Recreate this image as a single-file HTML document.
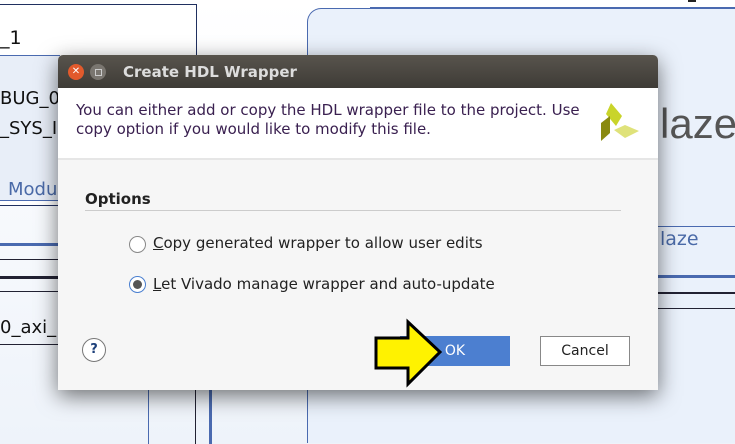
<!DOCTYPE html>
<html style="height:444px;overflow:hidden"><head><style>
body{margin:0;width:735px;height:444px;overflow:hidden;background:#f4f7fb;font-family:"DejaVu Sans","Liberation Sans",sans-serif;position:relative}
.a{position:absolute}
</style></head><body>
<div class="a" style="left:0;top:0;width:735px;height:444px;background:linear-gradient(#fff,#eef3fa)"></div>
<div class="a" style="left:-2px;top:4px;width:197px;height:200px;border:1px solid #203060;background:#fff"></div>
<div class="a" style="left:0;top:55px;width:60px;height:145px;background:#e8eef8;border-top:1px solid #4a6ab0"></div>
<div class="a" style="left:0;top:27px;font-size:19px;color:#111">_1</div>
<div class="a" style="left:0;top:88px;font-size:18px;color:#111">BUG_0</div>
<div class="a" style="left:0;top:118px;font-size:18px;color:#111">_SYS_I</div>
<div class="a" style="left:8px;top:179px;font-size:18px;color:#4a6aa8">Modu</div>
<div class="a" style="left:0;top:200px;width:60px;height:1px;background:#4a6ab0"></div>
<div class="a" style="left:0;top:243px;width:60px;height:3px;background:#4a6ab0"></div>
<div class="a" style="left:0;top:259px;width:60px;height:1px;background:#223"></div>
<div class="a" style="left:0;top:276px;width:60px;height:3px;background:#223"></div>
<div class="a" style="left:0;top:291px;width:60px;height:1px;background:#223"></div>
<div class="a" style="left:0;top:317px;font-size:18px;color:#111">0_axi_</div>
<div class="a" style="left:0;top:344px;width:60px;height:1px;background:#223"></div>
<div class="a" style="left:370px;top:7px;width:365px;height:1px;background:#4a6ab0"></div>
<div class="a" style="left:307px;top:8px;width:427px;height:434px;border:1px solid #4a6ab0;border-right:none;border-bottom:none;border-radius:14px 0 0 0;background:#eaf1fb"></div>
<div class="a" style="left:688px;top:0;width:8px;height:2px;background:#222"></div>
<div class="a" style="left:660px;top:100px;font-size:42px;color:#555;font-family:'Liberation Sans',sans-serif;width:75px;overflow:hidden;white-space:nowrap">laze</div>
<div class="a" style="left:660px;top:228px;font-size:19px;color:#4a6aa8">laze</div>
<div class="a" style="left:658px;top:226px;width:77px;height:1px;background:#4a6ab0"></div>
<div class="a" style="left:658px;top:275px;width:77px;height:3px;background:#4a6ab0"></div>
<div class="a" style="left:658px;top:292px;width:77px;height:2px;background:#223"></div>
<div class="a" style="left:658px;top:308px;width:77px;height:1px;background:#223"></div>
<div class="a" style="left:148px;top:390px;width:1px;height:54px;background:#4a6ab0"></div>
<div class="a" style="left:195px;top:390px;width:1px;height:54px;background:#223"></div>
<div class="a" style="left:209px;top:390px;width:3px;height:54px;background:#4a6ab0"></div>
<div class="a" style="left:58px;top:55px;width:600px;height:335px;box-shadow:0 6px 22px rgba(0,0,0,.55);border-radius:5px 5px 0 0;background:#f6f6f6;overflow:hidden">
 <div class="a" style="left:0;top:0;width:600px;height:33px;background:linear-gradient(#58544d,#3e3b36)"></div>
 <div class="a" style="left:10px;top:9px;width:16px;height:16px;border-radius:50%;background:#e25a2c;color:#fff;font-size:10px;text-align:center;line-height:16px">✕</div>
 <div class="a" style="left:32px;top:9px;width:16px;height:16px;border-radius:50%;background:#7a7670"><div class="a" style="left:5px;top:5px;width:5px;height:5px;border:1px solid #ccc"></div></div>
 <div class="a" style="left:65px;top:8px;font-size:15px;font-weight:bold;color:#ddd">Create HDL Wrapper</div>
 <div class="a" style="left:0;top:33px;width:600px;height:70px;background:#fff;border-bottom:2px solid #e6e6e6"></div>
 <div class="a" style="left:18px;top:46px;font-size:15px;color:#3a2050;line-height:19px;white-space:nowrap">You can either add or copy the HDL wrapper file to the project. Use<br>copy option if you would like to modify this file.</div>
 <svg class="a" style="left:540px;top:46px" width="44" height="44"><polygon points="13,2 24,15 18,25 8,13" fill="#c9d42a"/><polygon points="3,22 12,15 12,32 3,40" fill="#8a8a10"/><polygon points="16,29 27,24 41,30 27,37" fill="#dfe27a"/></svg>
 <div class="a" style="left:27px;top:135px;font-size:15px;font-weight:bold;color:#222">Options</div>
 <div class="a" style="left:27px;top:155px;width:536px;height:1px;background:#ccc"></div>
 <div class="a" style="left:71px;top:181px;width:15px;height:15px;border:1px solid #888;border-radius:50%;background:#fff"></div>
 <div class="a" style="left:95px;top:179px;font-size:15px;color:#222"><u>C</u>opy generated wrapper to allow user edits</div>
 <div class="a" style="left:71px;top:221px;width:15px;height:15px;border:1px solid #4a7fd0;border-radius:50%;background:#fff"><div class="a" style="left:3px;top:3px;width:9px;height:9px;border-radius:50%;background:#555"></div></div>
 <div class="a" style="left:95px;top:220px;font-size:15px;color:#222"><u>L</u>et Vivado manage wrapper and auto-update</div>
 <div class="a" style="left:24px;top:283px;width:22px;height:22px;border:1px solid #777;border-radius:50%;background:#fff;text-align:center;line-height:22px;font-size:13px;font-weight:bold;color:#1c3f7a">?</div>
 <div class="a" style="left:342px;top:281px;width:110px;height:30px;background:#4c7fd0;color:#fff;font-size:14px;text-align:center;line-height:30px">OK</div>
 <div class="a" style="left:482px;top:281px;width:88px;height:28px;border:1px solid #888;background:#fff;color:#222;font-size:14px;text-align:center;line-height:28px">Cancel</div>
</div>
<svg class="a" style="left:372px;top:318px" width="74" height="70"><polygon points="4,20 36,20 36,4 68,34 36,66 36,50 4,50" fill="#fff200" stroke="#000" stroke-width="3"/></svg>
</body></html>
